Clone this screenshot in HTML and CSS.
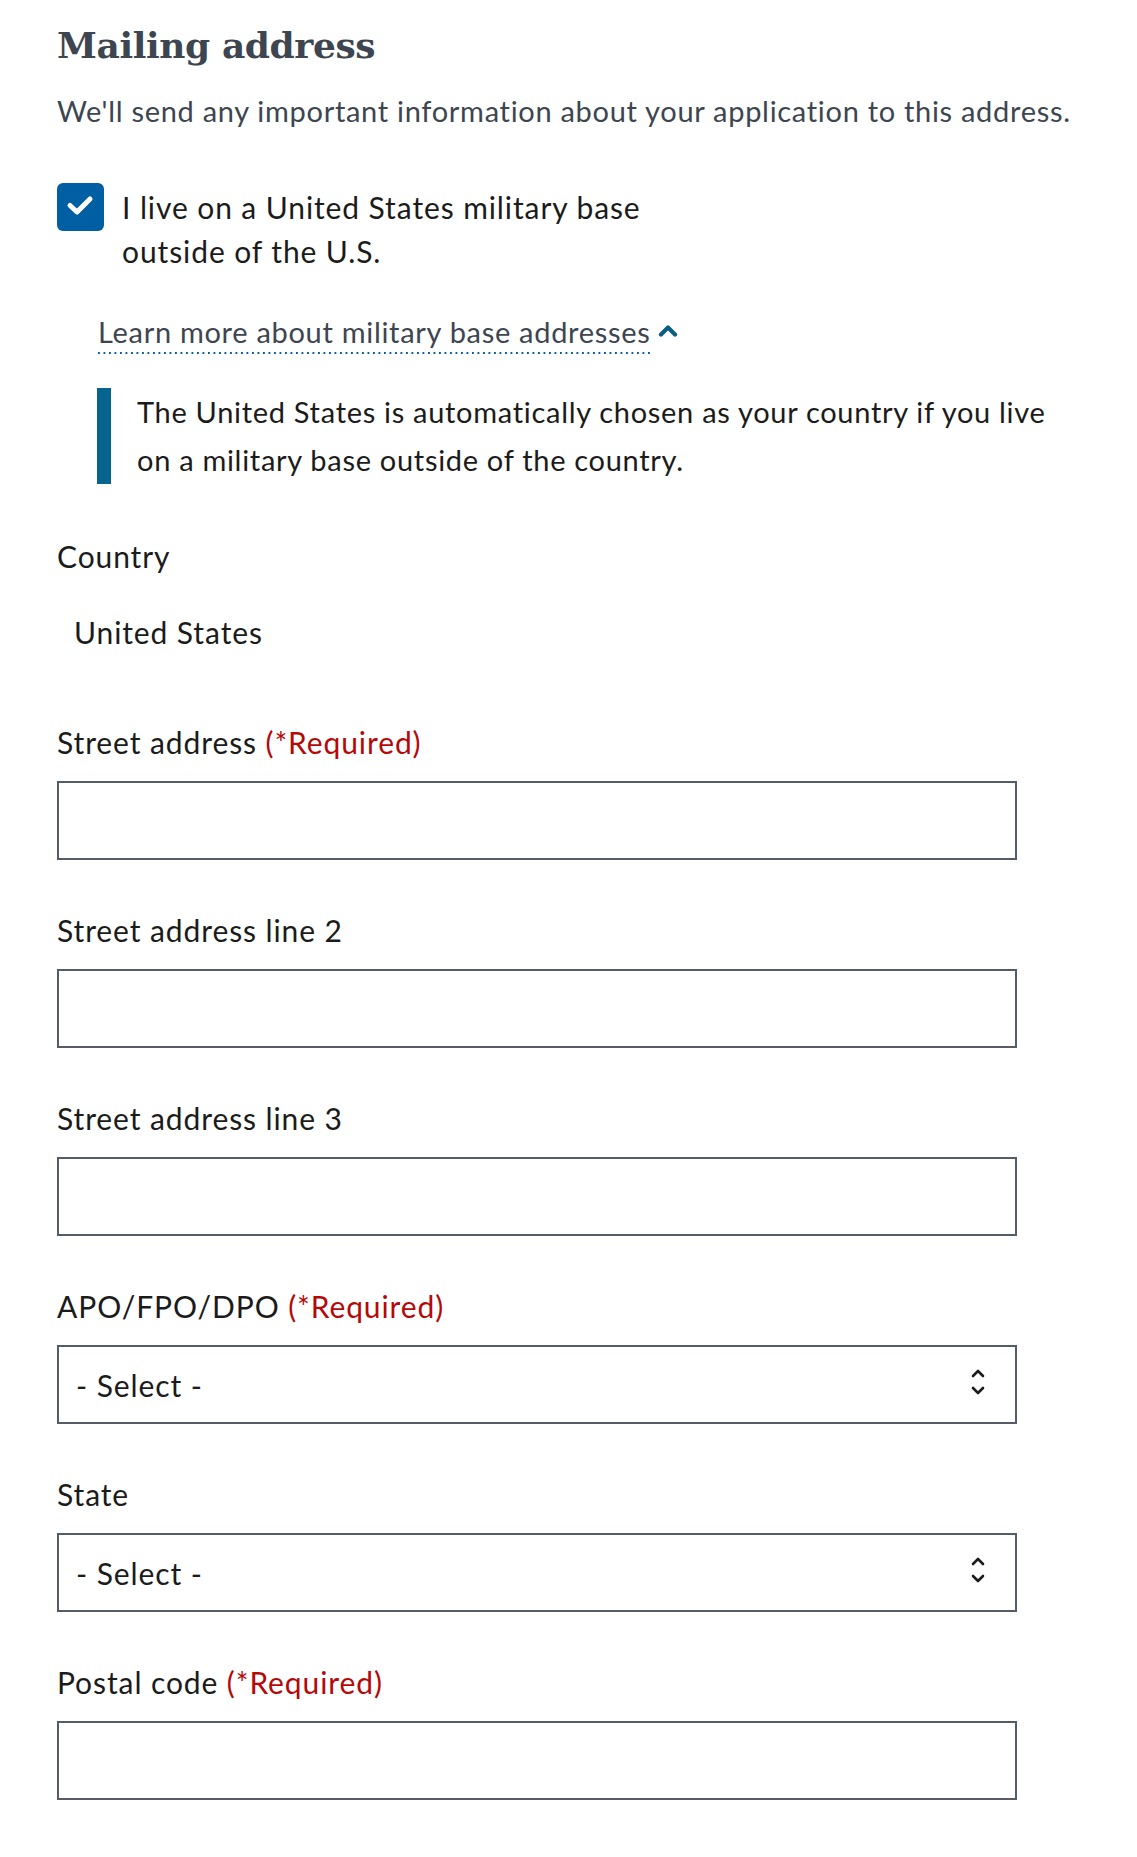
FILE: index.html
```html
<!DOCTYPE html>
<html lang="en">
<head>
<meta charset="utf-8">
<title>Mailing address</title>
<link rel="stylesheet" href="styles.css">
</head>
<body>
<main class="form">
  <h2 class="title">Mailing address</h2>
  <p class="intro">We'll send any important information about your application to this address.</p>

  <div class="check-row">
    <span class="check-box">
      <svg width="47" height="48" viewBox="0 0 47 48" aria-hidden="true">
        <polyline points="13,22.5 20,29 33,16" fill="none" stroke="#fff" stroke-width="5" stroke-linecap="round" stroke-linejoin="round"/>
      </svg>
    </span>
    <label class="check-label">I live on a United States military base<br>outside of the U.S.</label>
  </div>

  <div class="learn">
    <span class="learn-link">Learn more about military base addresses</span>
    <svg class="chev" width="20" height="13" viewBox="0 0 20 13" aria-hidden="true">
      <polyline points="3,10.5 10,3.5 17,10.5" fill="none" stroke="#0b5f87" stroke-width="4.2" stroke-linecap="round" stroke-linejoin="round"/>
    </svg>
  </div>

  <div class="info">
    <p>The United States is automatically chosen as your country if you live<br>on a military base outside of the country.</p>
  </div>

  <div class="static-field">
    <div class="label">Country</div>
    <div class="static-value">United States</div>
  </div>

  <div class="field">
    <label class="label">Street address <span class="req">(*Required)</span></label>
    <input class="text-input" type="text">
  </div>

  <div class="field">
    <label class="label">Street address line 2</label>
    <input class="text-input" type="text">
  </div>

  <div class="field">
    <label class="label">Street address line 3</label>
    <input class="text-input" type="text">
  </div>

  <div class="field">
    <label class="label">APO/FPO/DPO <span class="req">(*Required)</span></label>
    <div class="select-wrap">
      <select class="select"><option>- Select -</option></select>
      <svg class="updown" width="14" height="26" viewBox="0 0 14 26" aria-hidden="true">
        <polyline points="2,7 7,2 12,7" fill="none" stroke="#1b1b1b" stroke-width="2.6" stroke-linecap="round" stroke-linejoin="round"/>
        <polyline points="2,19 7,24 12,19" fill="none" stroke="#1b1b1b" stroke-width="2.6" stroke-linecap="round" stroke-linejoin="round"/>
      </svg>
    </div>
  </div>

  <div class="field">
    <label class="label">State</label>
    <div class="select-wrap">
      <select class="select"><option>- Select -</option></select>
      <svg class="updown" width="14" height="26" viewBox="0 0 14 26" aria-hidden="true">
        <polyline points="2,7 7,2 12,7" fill="none" stroke="#1b1b1b" stroke-width="2.6" stroke-linecap="round" stroke-linejoin="round"/>
        <polyline points="2,19 7,24 12,19" fill="none" stroke="#1b1b1b" stroke-width="2.6" stroke-linecap="round" stroke-linejoin="round"/>
      </svg>
    </div>
  </div>

  <div class="field">
    <label class="label">Postal code <span class="req">(*Required)</span></label>
    <input class="text-input" type="text">
  </div>
</main>
</body>
</html>
```
FILE: styles.css
```css
html, body {
  margin: 0;
  padding: 0;
  background: #fff;
}

body {
  font-family: Lato, "Noto Sans", sans-serif;
  font-size: 29px;
  letter-spacing: 0.7px;
  line-height: 40px;
  color: #1b1b1b;
}

.form {
  padding: 25px 0 40px 57px;
  display: flex;
  flex-direction: column;
  align-items: flex-start;
}

.title {
  margin: 0;
  font-family: "DejaVu Serif", serif;
  font-weight: bold;
  font-size: 36px;
  letter-spacing: -0.4px;
  line-height: 40px;
  color: #3d4551;
}

.intro {
  margin: 26px 0 0;
  color: #3d4551;
}

.check-row {
  margin-top: 52px;
  display: flex;
  align-items: flex-start;
}

.check-box {
  width: 47px;
  height: 48px;
  border-radius: 6px;
  background: #005ea2;
  display: flex;
  flex: none;
}

.check-label {
  margin: 2px 0 0 18px;
  line-height: 44px;
  font-size: 30px;
  letter-spacing: 0.9px;
}

.learn {
  margin: 39px 0 0 41px;
  display: flex;
  align-items: flex-start;
  gap: 7px;
}

.learn-link {
  color: #3d4551;
  padding-bottom: 2px;
  background-image: linear-gradient(to right, #005ea2 2px, transparent 2px);
  background-repeat: repeat-x;
  background-position: left bottom;
  background-size: 5.5px 2px;
}

.chev {
  margin-top: 12px;
}

.info {
  margin: 34px 0 0 40px;
  border-left: 14px solid #07648f;
  padding-left: 26px;
}

.info p {
  margin: 0;
  line-height: 48px;
}

.static-field {
  margin-top: 52px;
  display: flex;
  flex-direction: column;
}

.label,
.static-value,
.select {
  font-size: 30px;
  letter-spacing: 0.9px;
}

.static-value {
  margin-top: 36px;
  padding-left: 17px;
}

.field {
  display: flex;
  flex-direction: column;
  margin-top: 70px;
}

.static-field + .field {
  margin-top: 70px;
}

.field + .field {
  margin-top: 50px;
}

.label {
  display: block;
}

.req {
  color: #b50909;
}

.text-input,
.select {
  box-sizing: border-box;
  width: 960px;
  height: 79px;
  margin: 19px 0 0;
  border: 2.5px solid #565c65;
  border-radius: 0;
  background: #fff;
  font-family: inherit;
  color: #1b1b1b;
  padding: 0 17px;
  outline: none;
}

.select-wrap {
  position: relative;
  display: flex;
}

.select {
  appearance: none;
  -webkit-appearance: none;
}

.updown {
  position: absolute;
  right: 32px;
  top: 43px;
  pointer-events: none;
}
```
